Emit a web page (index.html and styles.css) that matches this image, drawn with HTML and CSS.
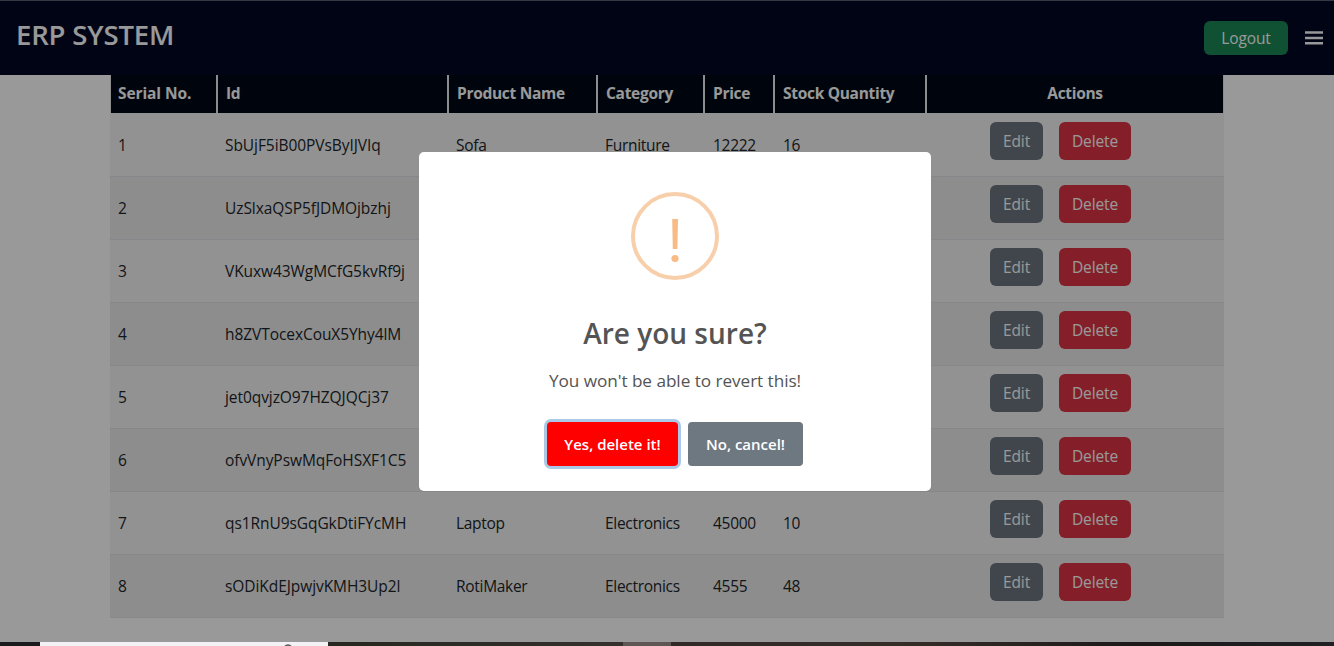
FILE: index.html
```html
<!DOCTYPE html>
<html lang="en">
<head>
<meta charset="utf-8">
<title>ERP System</title>
<link rel="stylesheet" href="styles.css">
</head>
<body>
<div class="page">
  <header class="navbar">
    <h1 class="brand">ERP SYSTEM</h1>
    <div class="nav-tools">
      <button class="btn btn-logout">Logout</button>
      <svg class="menu-icon" viewBox="0 0 18 14" width="18" height="14"><path d="M0 1.5h18M0 7h18M0 12.2h18" stroke="#fff" stroke-width="2.4"/></svg>
    </div>
  </header>
  <table class="products">
    <colgroup><col class="c-serial"><col class="c-id"><col class="c-name"><col class="c-cat"><col class="c-price"><col class="c-stock"><col class="c-act"></colgroup>
    <thead>
      <tr><th>Serial No.</th><th>Id</th><th>Product Name</th><th>Category</th><th>Price</th><th>Stock Quantity</th><th class="center">Actions</th></tr>
    </thead>
    <tbody>
      <tr><td>1</td><td>SbUjF5iB00PVsByIJVIq</td><td>Sofa</td><td>Furniture</td><td>12222</td><td>16</td><td><div class="actions"><button class="btn btn-edit">Edit</button><button class="btn btn-delete">Delete</button></div></td></tr>
      <tr><td>2</td><td>UzSlxaQSP5fJDMOjbzhj</td><td></td><td></td><td></td><td></td><td><div class="actions"><button class="btn btn-edit">Edit</button><button class="btn btn-delete">Delete</button></div></td></tr>
      <tr><td>3</td><td>VKuxw43WgMCfG5kvRf9j</td><td></td><td></td><td></td><td></td><td><div class="actions"><button class="btn btn-edit">Edit</button><button class="btn btn-delete">Delete</button></div></td></tr>
      <tr><td>4</td><td>h8ZVTocexCouX5Yhy4lM</td><td></td><td></td><td></td><td></td><td><div class="actions"><button class="btn btn-edit">Edit</button><button class="btn btn-delete">Delete</button></div></td></tr>
      <tr><td>5</td><td>jet0qvjzO97HZQJQCj37</td><td></td><td></td><td></td><td></td><td><div class="actions"><button class="btn btn-edit">Edit</button><button class="btn btn-delete">Delete</button></div></td></tr>
      <tr><td>6</td><td>ofvVnyPswMqFoHSXF1C5</td><td></td><td></td><td></td><td></td><td><div class="actions"><button class="btn btn-edit">Edit</button><button class="btn btn-delete">Delete</button></div></td></tr>
      <tr><td>7</td><td>qs1RnU9sGqGkDtiFYcMH</td><td>Laptop</td><td>Electronics</td><td>45000</td><td>10</td><td><div class="actions"><button class="btn btn-edit">Edit</button><button class="btn btn-delete">Delete</button></div></td></tr>
      <tr><td>8</td><td>sODiKdEJpwjvKMH3Up2l</td><td>RotiMaker</td><td>Electronics</td><td>4555</td><td>48</td><td><div class="actions"><button class="btn btn-edit">Edit</button><button class="btn btn-delete">Delete</button></div></td></tr>
    </tbody>
  </table>
</div>
<div class="taskbar">
  <span class="task-start"></span>
  <span class="task-search"><svg width="12" height="4" viewBox="0 0 12 4"><path d="M2.5 4.8Q6 1 9.5 4.8" fill="none" stroke="#555" stroke-width="1.5"/></svg></span>
  <span class="task-gap"></span>
  <span class="task-active"></span>
  <span class="task-rest"></span>
</div>
<div class="overlay">
  <div class="popup" role="dialog">
    <div class="warning"><svg width="88" height="88" viewBox="0 0 88 88"><circle cx="44" cy="44" r="42" fill="none" stroke="#f8cfab" stroke-width="4"/><path d="M41.2 27h5.8l-.6 30h-4.6z" fill="#f8bb86"/><circle cx="44" cy="66.5" r="3.6" fill="#f8bb86"/></svg></div>
    <h2 class="popup-title">Are you sure?</h2>
    <p class="popup-text">You won't be able to revert this!</p>
    <div class="popup-actions">
      <button class="confirm">Yes, delete it!</button>
      <button class="cancel">No, cancel!</button>
    </div>
  </div>
</div>
</body>
</html>
```

FILE: styles.css
```css
* { box-sizing: border-box; }
body {
  margin: 0;
  height: 646px;
  overflow: hidden;
  display: flex;
  flex-direction: column;
  font-family: "Segoe UI", "Open Sans", "Noto Sans", sans-serif;
  font-size: 15.5px;
  line-height: 24px;
  color: #212529;
  background: #fff;
}
button { font: inherit; border: 0; padding: 0; margin: 0; white-space: nowrap; }
.page { height: 642px; }
.navbar {
  height: 75px;
  padding: 0 11px 0 16px;
  display: flex;
  justify-content: space-between;
  background: #030824;
  border-top: 1px solid #5b6072;
}
.brand { margin: 17px 0 0; font-size: 27.5px; line-height: 34px; font-weight: 600; letter-spacing: -0.15px; color: #fff; }
.nav-tools { display: flex; align-items: center; gap: 17px; height: 74px; }
.btn { height: 38px; border-radius: 6px; color: #fff; letter-spacing: -0.1px; }
.btn-logout { width: 84px; height: 34px; background: #198754; }
.menu-icon { display: block; }
.products { width: 1114px; margin-left: 110px; table-layout: fixed; border-spacing: 0; }
.c-serial { width: 108px; }
.c-id { width: 231px; }
.c-name { width: 149px; }
.c-cat { width: 107px; }
.c-price { width: 70px; }
.c-stock { width: 152px; }
.c-act { width: 297px; }
th {
  height: 38px;
  padding: 0 0 2px 8px;
  text-align: left;
  font-weight: 700;
  white-space: nowrap;
  letter-spacing: -0.3px;
  color: #fff;
  background: #000814;
  border-right: 2px solid #e9ecef;
}
th:first-child { border-left: 1px solid #e9ecef; padding-left: 7px; letter-spacing: -0.1px; }
th:last-child { border-right-width: 1px; }
th.center { text-align: center; padding: 0 0 2px; }
td { height: 63px; padding: 0 0 0 7px; white-space: nowrap; background: #f4f4f4; border-bottom: 1px solid #dee2e6; letter-spacing: -0.3px; }
td:first-child { padding-left: 8px; }
td:nth-child(2) { letter-spacing: -0.07px; }
td:nth-child(5), td:nth-child(6) { padding-left: 8px; }
tr:nth-child(even) td { background: #ececec; }
tbody tr:first-child td { height: 64px; border-top: 1px solid #f4f4f4; }
.actions { display: flex; gap: 16px; padding: 0 0 8px 56px; }
.btn-edit { width: 53px; background: #6c757d; }
.btn-delete { width: 72px; background: #dc3545; }
.taskbar { display: flex; height: 4px; position: relative; z-index: 2; }
.task-start { width: 40px; background: #1b1a1c; }
.task-search { width: 288px; padding-left: 242px; display: flex; background: #f3f1f3; }
.task-gap { width: 295px; background: linear-gradient(90deg, #262720, #35302c); }
.task-active { width: 48px; background: #5e5554; }
.task-rest { flex: 1; background: linear-gradient(90deg, #302928, #352d28 35%, #1d191a 70%, #202024); }
.overlay { position: absolute; inset: 0; background: rgba(0, 0, 0, .4); z-index: 1; }
.popup {
  width: 512px;
  height: 339px;
  margin: 152px 0 0 419px;
  padding-top: 40px;
  display: flex;
  flex-direction: column;
  align-items: center;
  background: #fff;
  border-radius: 5px;
  color: #545454;
}
.warning { height: 88px; }
.popup-title { margin: 35px 0 0; font-size: 28px; line-height: 36px; font-weight: 600; }
.popup-text { margin: 17px 0 0; font-size: 17.2px; line-height: 26px; letter-spacing: -0.05px; }
.popup-actions { display: flex; gap: 10px; margin-top: 28px; }
.confirm, .cancel { height: 44px; border-radius: 4px; color: #fff; font-size: 15px; font-weight: 600; }
.confirm { width: 131px; background: #f00; box-shadow: 0 0 0 3px #abc9e6; }
.cancel { width: 115px; background: #6e7881; }
```
